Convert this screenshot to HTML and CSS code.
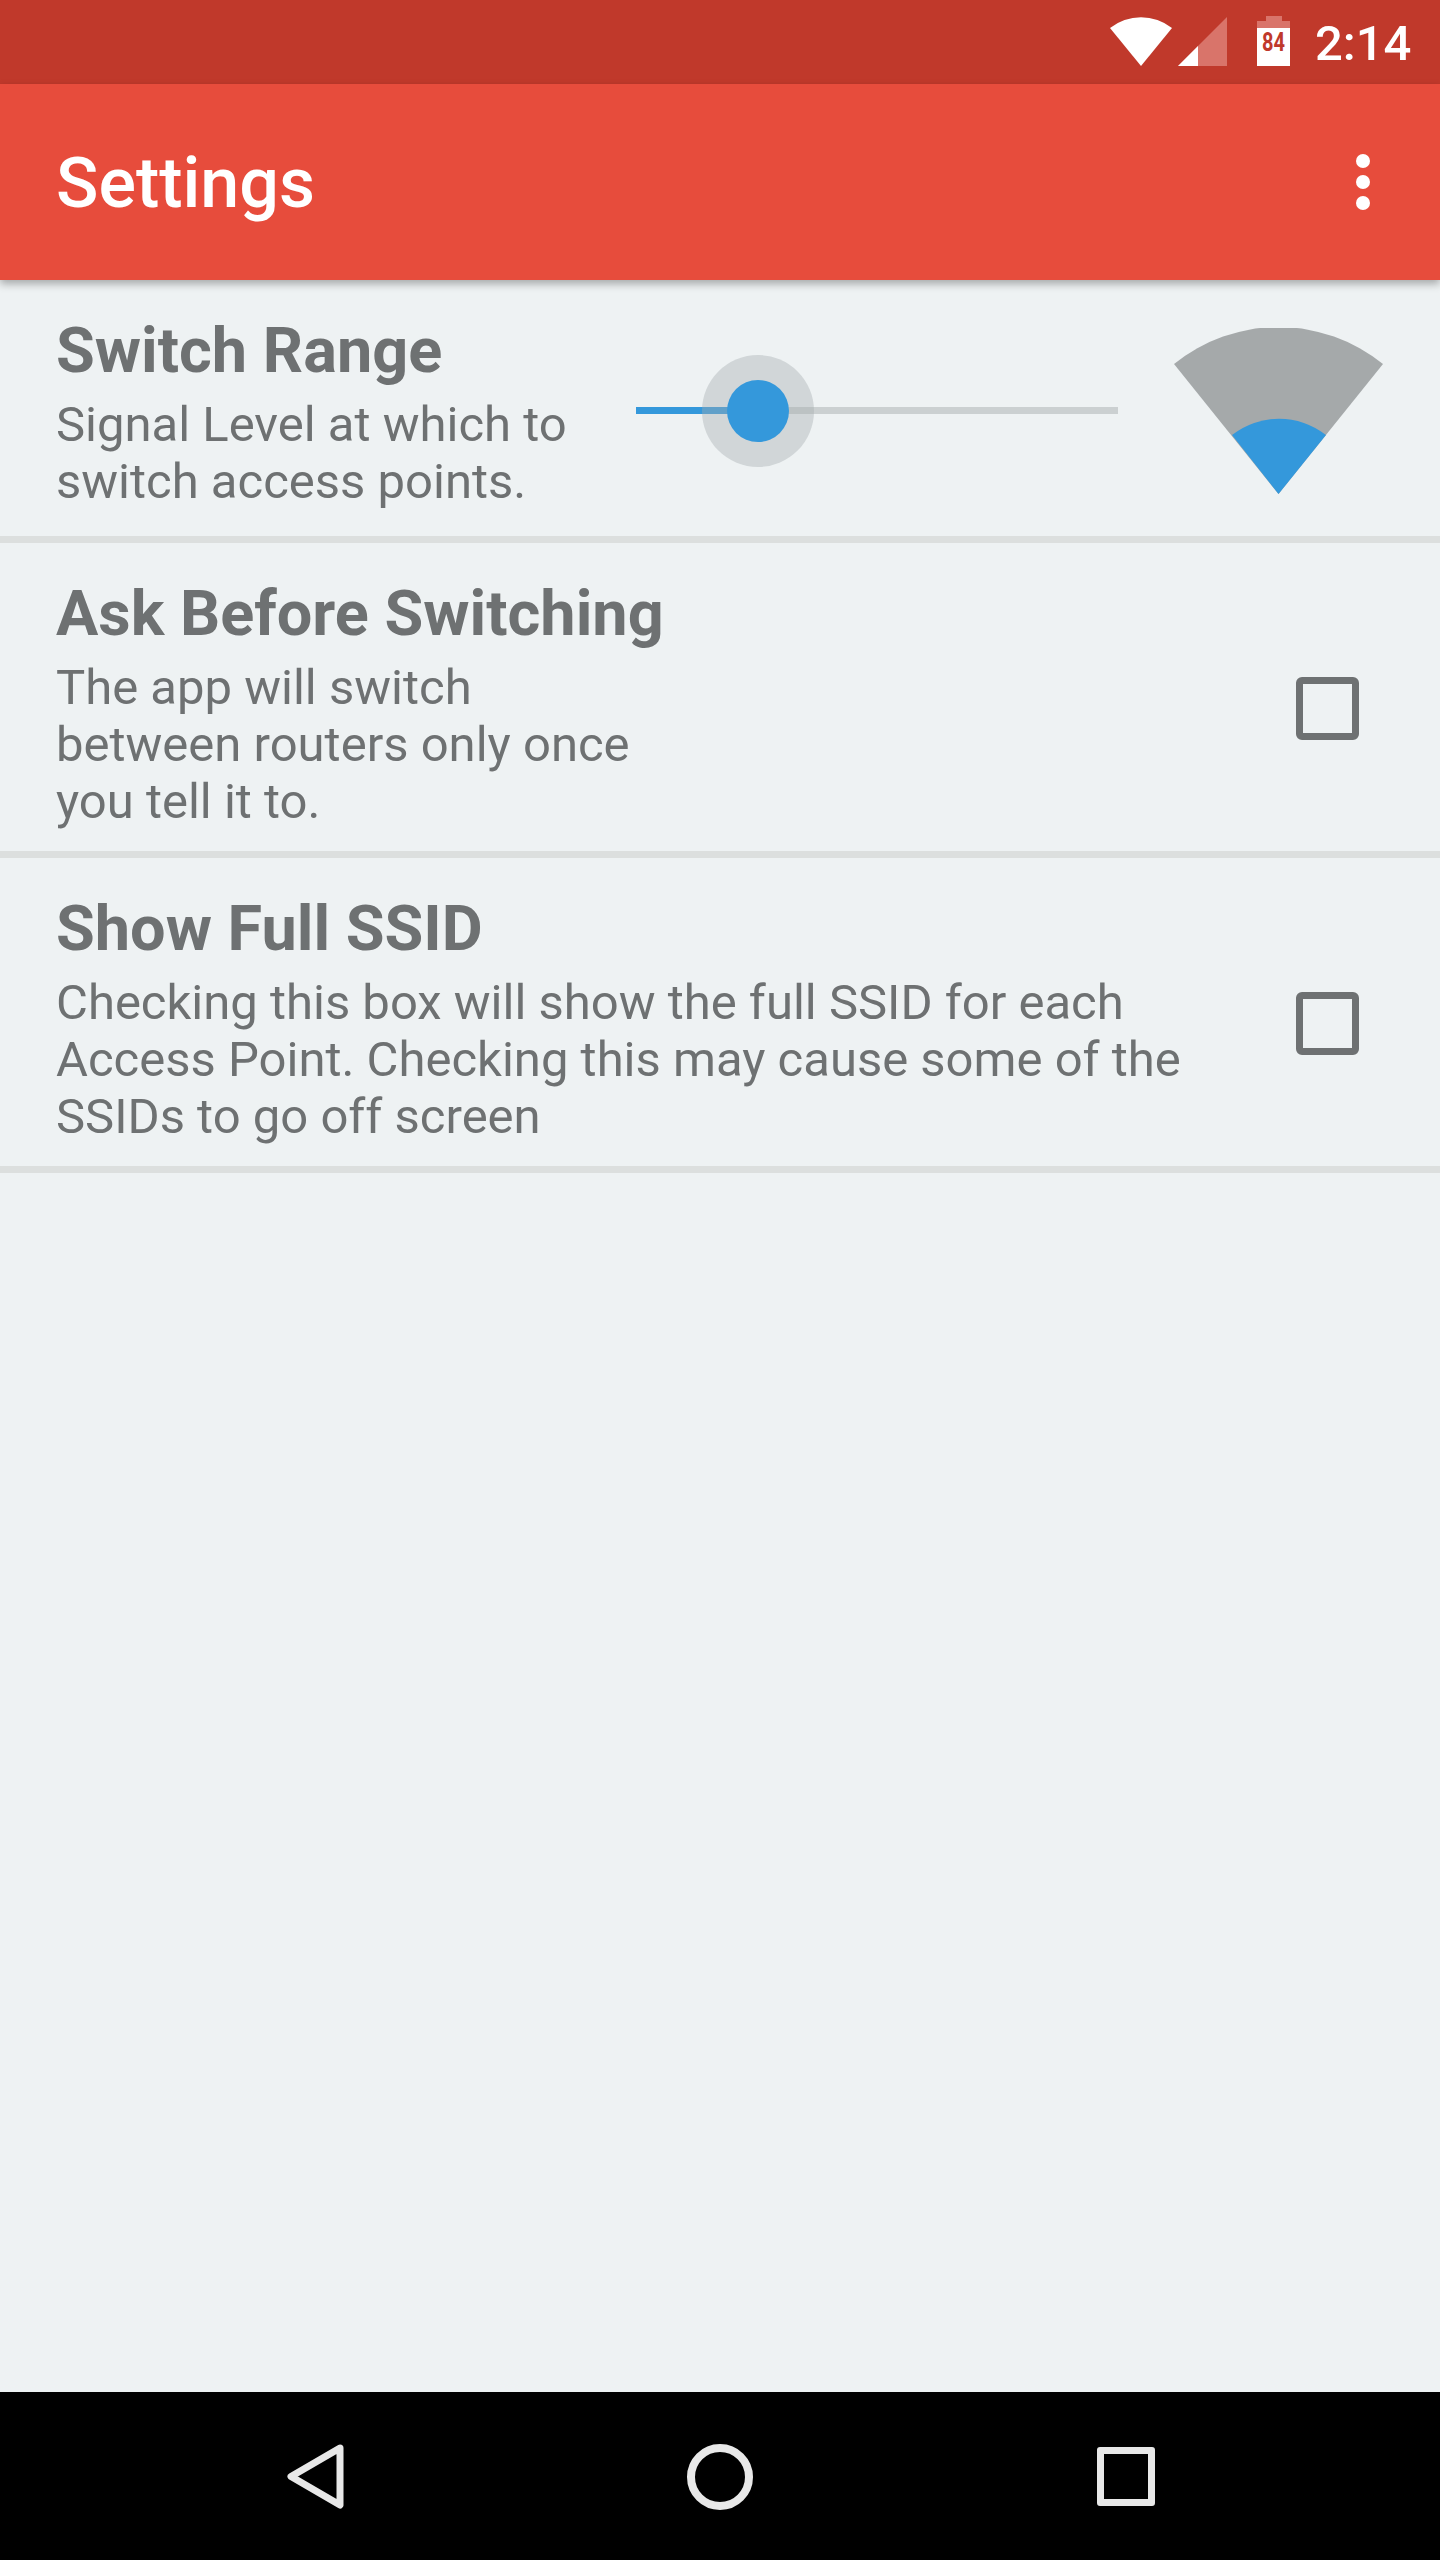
FILE: index.html
```html
<!DOCTYPE html>
<html>
<head>
    <title>Settings</title>
    <link rel="stylesheet" href="styles.css">
</head>
<body>
    <div class="status-bar">
        <svg class="status-wifi" viewBox="0 0 62 49" width="62" height="49">
            <path d="M0 11 A50 50 0 0 1 62 11 L31 49 Z" fill="#fff"/>
        </svg>
        <svg class="status-signal" viewBox="0 0 49 49" width="49" height="49">
            <path d="M49 0 V49 H0 Z" fill="#d9746a"/>
            <path d="M20 29 V49 H0 Z" fill="#fff"/>
        </svg>
        <svg class="status-battery" viewBox="0 0 33 50" width="33" height="50">
            <path d="M9 0 H25 V5 H33 V12 H0 V5 H9 Z" fill="#d9746a"/>
            <rect y="12" width="33" height="38" fill="#fff"/>
            <text class="battery-level" x="5" y="35" textLength="23" lengthAdjust="spacingAndGlyphs">84</text>
        </svg>
        <span class="status-time">2:14</span>
    </div>

    <div class="app-bar">
        <div class="app-title">Settings</div>
        <div class="overflow-menu">
            <span class="dot"></span>
            <span class="dot"></span>
            <span class="dot"></span>
        </div>
    </div>

    <div class="content">
        <div class="row row-range">
            <div class="row-text range-text">
                <div class="row-title">Switch Range</div>
                <div class="row-desc">Signal Level at which to<br>switch access points.</div>
            </div>
            <div class="slider">
                <div class="slider-track"></div>
                <div class="slider-fill"></div>
                <div class="slider-halo"></div>
                <div class="slider-thumb"></div>
            </div>
            <svg class="range-wifi" viewBox="0 0 209 166" width="209" height="166">
                <path d="M0 36 A166 166 0 0 1 209 36 L104.500 166 Z" fill="#a5a9aa"/>
                <path d="M58 107 A76 76 0 0 1 152 107 L104.500 166 Z" fill="#3498db"/>
            </svg>
        </div>
        <div class="row">
            <div class="row-text">
                <div class="row-title">Ask Before Switching</div>
                <div class="row-desc">The app will switch<br>between routers only once<br>you tell it to.</div>
            </div>
            <div class="checkbox"></div>
        </div>
        <div class="row">
            <div class="row-text">
                <div class="row-title">Show Full SSID</div>
                <div class="row-desc">Checking this box will show the full SSID for each<br>Access Point. Checking this may cause some of the<br>SSIDs to go off screen</div>
            </div>
            <div class="checkbox"></div>
        </div>
    </div>

    <div class="nav-bar">
        <svg class="nav-back" viewBox="0 0 57 65" width="57" height="65">
            <path d="M53 4 L4 32.500 L53 61 Z" fill="none" stroke="#e8e8e8" stroke-width="7" stroke-linejoin="round"/>
        </svg>
        <div class="nav-home"></div>
        <div class="nav-recent"></div>
    </div>
</body>
</html>
```

FILE: styles.css
```css
* {
    box-sizing: border-box;
}
body {
    margin: 0;
    height: 2560px;
    display: flex;
    flex-direction: column;
    font-family: Roboto, "Liberation Sans", sans-serif;
    background: #eef2f3;
}
.status-bar {
    height: 84px;
    flex: none;
    display: flex;
    align-items: flex-start;
    padding-top: 17px;
    padding-left: 1110px;
    background: #c0392b;
}
.status-wifi {
    margin-right: 6px;
}
.status-signal {
    margin-right: 30px;
}
.status-battery {
    margin-top: -1px;
    margin-right: 25px;
}
.battery-level {
    font-size: 25px;
    font-weight: 700;
    fill: #c0392b;
}
.status-time {
    font-size: 49px;
    font-weight: 500;
    line-height: 56px;
    margin-top: -1px;
    color: #fff;
}
.app-bar {
    height: 196px;
    flex: none;
    display: flex;
    justify-content: space-between;
    align-items: center;
    padding: 0 70px 0 56px;
    background: #e74c3c;
    box-shadow: 0 4px 8px rgba(0, 0, 0, 0.3);
    position: relative;
}
.app-title {
    font-size: 70px;
    font-weight: 500;
    margin-top: 2px;
    color: #fff;
}
.overflow-menu {
    display: flex;
    flex-direction: column;
    gap: 7px;
}
.dot {
    width: 14px;
    height: 14px;
    border-radius: 50%;
    background: #fff;
}
.content {
    flex: 1;
}
.row {
    height: 315px;
    display: flex;
    justify-content: space-between;
    padding: 38px 81px 0 56px;
    border-bottom: 7px solid #dcdfde;
}
.row-range {
    height: 263px;
    justify-content: flex-start;
    padding-right: 57px;
}
.range-text {
    width: 580px;
}
.row-title {
    font-size: 63px;
    font-weight: 700;
    line-height: 66px;
    margin-bottom: 12px;
    color: #6e7172;
}
.row-desc {
    font-size: 49px;
    line-height: 57px;
    color: #6e7172;
}
.slider {
    width: 482px;
    height: 112px;
    margin-top: 37px;
    margin-right: 56px;
    position: relative;
}
.slider-track {
    position: absolute;
    left: 0;
    right: 0;
    top: 52px;
    height: 7px;
    background: #cbd0d1;
}
.slider-fill {
    position: absolute;
    left: 0;
    top: 52px;
    width: 121px;
    height: 7px;
    background: #3498db;
}
.slider-halo {
    position: absolute;
    left: 66px;
    top: 0;
    width: 112px;
    height: 112px;
    border-radius: 50%;
    background: rgba(165, 172, 176, 0.4);
}
.slider-thumb {
    position: absolute;
    left: 91px;
    top: 25px;
    width: 62px;
    height: 62px;
    border-radius: 50%;
    background: #3498db;
}
.range-wifi {
    margin-top: 10px;
}
.checkbox {
    width: 63px;
    height: 63px;
    margin-top: 96px;
    border: 7px solid #6e7172;
    border-radius: 6px;
}
.nav-bar {
    height: 168px;
    flex: none;
    position: relative;
    background: #000;
}
.nav-back {
    position: absolute;
    left: 287px;
    top: 52px;
}
.nav-home {
    position: absolute;
    left: 687px;
    top: 52px;
    width: 66px;
    height: 66px;
    border: 8px solid #e8e8e8;
    border-radius: 50%;
}
.nav-recent {
    position: absolute;
    left: 1097px;
    top: 55px;
    width: 58px;
    height: 59px;
    border: 7px solid #e8e8e8;
    border-radius: 3px;
}
```
